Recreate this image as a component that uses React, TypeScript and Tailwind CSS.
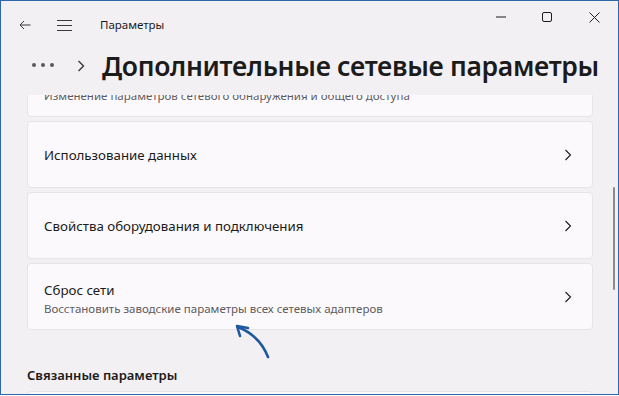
import React from 'react';

const FONT = { fontFamily: '"Noto Sans", "Open Sans", sans-serif' };

function Chevron() {
  return (
    <svg width="8" height="12" viewBox="0 0 8 12" className="shrink-0">
      <path d="M1.5 1 L6.5 6 L1.5 11" fill="none" stroke="#1b1b1b" strokeWidth="1.1" />
    </svg>
  );
}

function Card({ title, sub, className = '' }: { title: string; sub?: string; className?: string }) {
  return (
    <div
      className={`flex items-center justify-between h-[67px] shrink-0 rounded-[4px] border border-[#e7e4e8] bg-[#fcf9fc] pl-[16px] pr-[20px] ${className}`}
    >
      <div className={`flex flex-col ${sub ? 'pt-[4px]' : ''}`}>
        <span className="text-[13.3px] leading-[20px] text-[#1b1b1b] whitespace-nowrap">{title}</span>
        {sub && <span className="text-[11.5px] leading-[17px] text-[#5d5b5e] whitespace-nowrap">{sub}</span>}
      </div>
      <Chevron />
    </div>
  );
}

export default function App() {
  return (
    <div
      style={FONT}
      className="relative w-[619px] h-[395px] overflow-hidden border border-[#2b67aa] bg-[#f3f0f4] flex flex-col"
    >
      {/* Title bar */}
      <div className="flex items-center h-[48px] shrink-0">
        <div className="w-[18px]" />
        <svg width="12" height="10" viewBox="0 0 12 10">
          <path d="M11.5 5 H1 M5 1 L1 5 L5 9" fill="none" stroke="#3a3a3a" strokeWidth="1" />
        </svg>
        <div className="w-[26px]" />
        <svg width="16" height="11" viewBox="0 0 16 11">
          <path d="M0 0.5 H15 M0 5.5 H15 M0 10.5 H15" fill="none" stroke="#3a3a3a" strokeWidth="1" />
        </svg>
        <span className="ml-[27px] text-[11.5px] text-[#1b1b1b]">Параметры</span>
        <div className="flex-1" />
        <div className="flex items-start self-start pt-[11px]">
          <svg width="11" height="11" viewBox="0 0 11 11">
            <path d="M0 5 H10" fill="none" stroke="#1b1b1b" strokeWidth="1" />
          </svg>
          <svg width="11" height="11" viewBox="0 0 11 11" className="ml-[35px]">
            <rect x="0.5" y="0.5" width="9" height="9" rx="1.5" fill="none" stroke="#1b1b1b" strokeWidth="1" />
          </svg>
          <svg width="11" height="11" viewBox="0 0 11 11" className="ml-[36px] mr-[18px]">
            <path d="M0.5 0.5 L10.5 10.5 M10.5 0.5 L0.5 10.5" fill="none" stroke="#1b1b1b" strokeWidth="1" />
          </svg>
        </div>
      </div>

      {/* Breadcrumb header */}
      <div className="flex items-start h-[46px] shrink-0">
        <div className="flex items-center h-[34px] pl-[31px]">
          <div className="flex gap-[5px] mb-[3px]">
            <span className="w-[4px] h-[4px] rounded-full bg-[#5a5a5a]" />
            <span className="w-[4px] h-[4px] rounded-full bg-[#5a5a5a]" />
            <span className="w-[4px] h-[4px] rounded-full bg-[#5a5a5a]" />
          </div>
          <svg width="8" height="12" viewBox="0 0 8 12" className="ml-[23px]">
            <path d="M1.5 1 L6.5 6 L1.5 11" fill="none" stroke="#3a3a3a" strokeWidth="1.4" />
          </svg>
          <span className="ml-[17px] text-[26.5px] leading-[34px] font-semibold text-[#1b1b1b] tracking-[-0.3px] whitespace-nowrap">
            Дополнительные сетевые параметры
          </span>
        </div>
      </div>

      {/* Content */}
      <div className="flex-1 overflow-hidden pl-[26px] pr-[25px]">
        <div className="flex flex-col gap-[4px]">
          <Card
            className="-mt-[45px]"
            title="Общие параметры"
            sub="Изменение параметров сетевого обнаружения и общего доступа"
          />
          <Card title="Использование данных" />
          <Card title="Свойства оборудования и подключения" />
          <Card title="Сброс сети" sub="Восстановить заводские параметры всех сетевых адаптеров" />
        </div>
        <div className="mt-[35px] text-[13px] leading-[20px] font-semibold text-[#1b1b1b]">
          Связанные параметры
        </div>
        <div className="mt-[6px] h-[40px] rounded-[4px] border border-[#e7e4e8] bg-[#fcf9fc]" />
      </div>

      {/* Scrollbar thumb */}
      <div className="absolute left-[612px] top-[186px] w-[2px] h-[103px] rounded-full bg-[#8a8a8a]" />

      {/* Annotation arrow */}
      <svg className="absolute left-0 top-0 pointer-events-none" width="619" height="395">
        <path
          d="M267 356 Q259 335 237 326"
          fill="none"
          stroke="#1e58a0"
          strokeWidth="2.6"
          strokeLinecap="round"
        />
        <path
          d="M247 327 L236 325 L239 335"
          fill="none"
          stroke="#1e58a0"
          strokeWidth="2.6"
          strokeLinecap="round"
          strokeLinejoin="round"
        />
      </svg>
    </div>
  );
}
